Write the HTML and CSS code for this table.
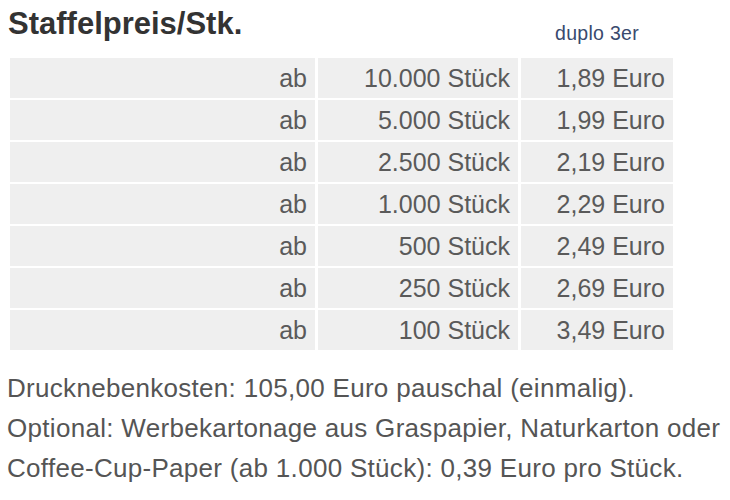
FILE: index.html
```html
<!DOCTYPE html>
<html lang="de">
<head>
<meta charset="utf-8">
<title>Staffelpreis</title>
<link rel="stylesheet" href="styles.css">
</head>
<body>
<div class="wrap">
  <div class="prices">
    <h2 class="title">Staffelpreis/Stk.</h2>
    <div class="variant">duplo 3er</div>

    <div class="cell">ab</div><div class="cell">10.000 Stück</div><div class="cell">1,89 Euro</div>
    <div class="cell">ab</div><div class="cell">5.000 Stück</div><div class="cell">1,99 Euro</div>
    <div class="cell">ab</div><div class="cell">2.500 Stück</div><div class="cell">2,19 Euro</div>
    <div class="cell">ab</div><div class="cell">1.000 Stück</div><div class="cell">2,29 Euro</div>
    <div class="cell">ab</div><div class="cell">500 Stück</div><div class="cell">2,49 Euro</div>
    <div class="cell">ab</div><div class="cell">250 Stück</div><div class="cell">2,69 Euro</div>
    <div class="cell">ab</div><div class="cell">100 Stück</div><div class="cell">3,49 Euro</div>
  </div>
  <p class="note">Drucknebenkosten: 105,00 Euro pauschal (einmalig).<br>Optional: Werbekartonage aus Graspapier, Naturkarton oder Coffee-Cup-Paper (ab 1.000 Stück): 0,39 Euro pro Stück.</p>
</div>
</body>
</html>
```

FILE: styles.css
```css
html, body {
  margin: 0;
  padding: 0;
  background: #ffffff;
}

body {
  font-family: "Liberation Sans", Arial, Helvetica, sans-serif;
  color: #555555;
}

.wrap {
  padding: 0 4px 0 10px;
}

.prices {
  display: grid;
  grid-template-columns: 305px 200px 152px;
  grid-template-rows: 56px repeat(7, 40px);
  column-gap: 3px;
  row-gap: 2px;
}

.title {
  grid-column: 1 / 3;
  margin: 7px 0 0 -2px;
  font-size: 31px;
  line-height: 34px;
  font-weight: bold;
  color: #333333;
  align-self: start;
}

.variant {
  grid-column: 3;
  margin-top: 21px;
  align-self: start;
  text-align: center;
  font-size: 19.5px;
  line-height: 24px;
  color: #394a6e;
  letter-spacing: 0.3px;
}

.cell {
  background: #efefef;
  font-size: 25px;
  line-height: 40px;
  text-align: right;
  padding-right: 8px;
  color: #5a5a5a;
}

.note {
  margin: 18px 0 0 -3px;
  font-size: 26px;
  line-height: 40px;
  letter-spacing: 0.3px;
  color: #555555;
}
```
